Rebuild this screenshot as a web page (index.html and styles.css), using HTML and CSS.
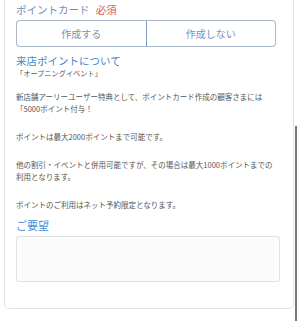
FILE: index.html
```
<!DOCTYPE html>
<html lang="ja">
<head>
    <meta charset="UTF-8">
    <meta name="viewport" content="width=device-width, initial-scale=1.0">
    <title>ポイントカード</title>
    <link rel="stylesheet" href="styles.css">
</head>
<body>
    <div class="card">
        <div class="label">ポイントカード <span class="required">必須</span></div>
        <div class="choice">
            <button class="choice-btn">作成する</button>
            <button class="choice-btn">作成しない</button>
        </div>

        <h2 class="section-title">来店ポイントについて</h2>
        <p class="event">「オープニングイベント」</p>
        <p class="note">新店舗アーリーユーザー特典として、ポイントカード作成の顧客さまには<br>「5000ポイント付与！</p>
        <p class="note">ポイントは最大2000ポイントまで可能です。</p>
        <p class="note">他の割引・イベントと併用可能ですが、その場合は最大1000ポイントまでの<br>利用となります。</p>
        <p class="note">ポイントのご利用はネット予約限定となります。</p>

        <h2 class="section-title request">ご要望</h2>
        <textarea class="request-box"></textarea>
    </div>
    <div class="scrollbar"></div>
</body>
</html>
```

FILE: styles.css
```
body {
    margin: 0;
    background: #fff;
    font-family: "Noto Sans CJK JP", "Noto Sans", sans-serif;
    color: #555;
    position: relative;
    height: 321px;
    overflow: hidden;
}
.card {
    margin: 0 4px 0 4px;
    width: 290px;
    border: 1px solid #e4e4e4;
    border-top: none;
    border-radius: 0 0 5px 5px;
    padding: 2px 15px 26px 11px;
    box-sizing: border-box;
}
.label {
    font-size: 10.5px;
    line-height: 16px;
    color: #6f8fbd;
}
.required {
    color: #e0555a;
    margin-left: 4px;
}
.choice {
    display: flex;
    margin-top: 2px;
    width: 260px;
}
.choice-btn {
    flex: 1;
    height: 27px;
    background: #fff;
    border: 1px solid #aab8ca;
    color: #7a93b8;
    font-family: inherit;
    font-size: 10px;
    padding: 0;
}
.choice-btn:first-child {
    border-radius: 4px 0 0 4px;
    border-right-color: #7f9cc8;
}
.choice-btn:last-child {
    border-left: none;
    border-radius: 0 4px 4px 0;
}
.section-title {
    margin: 7px 0 0;
    font-size: 10.5px;
    line-height: 14px;
    font-weight: normal;
    color: #4b87c9;
}
.event {
    margin: 0;
    font-size: 7.2px;
    line-height: 11px;
    color: #555;
}
.note {
    margin: 16px 0 0;
    font-size: 7.5px;
    line-height: 12px;
    color: #555;
}
.event + .note {
    margin-top: 12px;
}
.request {
    margin-top: 7px;
    color: #4b8fd6;
    font-size: 11px;
}
.request-box {
    display: block;
    margin-top: 4px;
    width: 264px;
    height: 46px;
    box-sizing: border-box;
    border: 1px solid #e2e2e2;
    border-radius: 3px;
    background: #fbfbfb;
    resize: none;
}
.scrollbar {
    position: absolute;
    left: 295px;
    top: 126px;
    width: 2px;
    height: 195px;
    background: #777;
}
```
